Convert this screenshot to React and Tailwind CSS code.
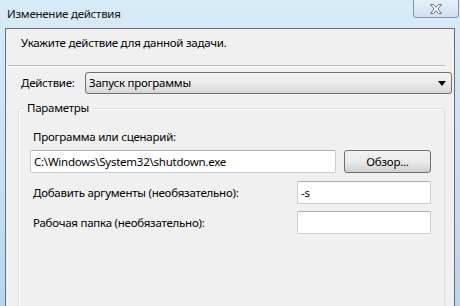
import React from 'react';

function CloseGlyph() {
  return (
    <svg width="14" height="12" viewBox="0 0 14 12">
      <path
        d="M1.5 1.5h3l2.5 2.8 2.5-2.8h3L9 6l3.5 4.5h-3L7 7.7 4.5 10.5h-3L5 6z"
        fill="#f4f6f8"
        stroke="#6b7480"
        strokeWidth="1"
        strokeLinejoin="round"
      />
    </svg>
  );
}

function TextBox({ value, className }) {
  return (
    <div
      className={`h-[23px] bg-white border border-[#c4ccd5] border-t-[#abadb3] rounded-[2px] flex items-center pl-[3px] text-black ${className}`}
    >
      {value}
    </div>
  );
}

export default function App() {
  return (
    <div
      className="w-[460px] h-[306px] overflow-hidden flex flex-col bg-gradient-to-b from-[#d8ebf8] via-[#c9e1f3] to-[#b9d5ec] text-[11.5px] leading-[16px] tracking-[-0.25px] text-black"
      style={{ fontFamily: '"Noto Sans", "Open Sans", sans-serif' }}
    >
      {/* title bar */}
      <div className="h-[28px] flex items-start justify-between shrink-0">
        <div className="pl-[7px] pt-[6px] text-[#111]">Изменение действия</div>
        <div className="w-[46px] h-[18px] mr-[1px] border border-t-0 border-[#8795a5] rounded-b-[4px] bg-gradient-to-b from-[#e6f0f8] to-[#cfe0ee] flex items-center justify-center">
          <CloseGlyph />
        </div>
      </div>

      {/* client area */}
      <div className="flex-1 mx-[5px] border border-b-0 border-[#6e6e6e] bg-[#f0f0f0] flex flex-col">
        <div className="pl-[15px] pt-[6px]">Укажите действие для данной задачи.</div>

        <div className="mt-[14px] ml-[2px] mr-[9px] h-[2px] border-t border-[#b9b9b9] border-b border-b-white" />

        <div className="mt-[5px] flex items-center pl-[15px] pr-[2px]">
          <div className="w-[64px] shrink-0">Действие:</div>
          <div className="flex-1 h-[22px] border border-[#707070] rounded-[3px] bg-gradient-to-b from-[#f2f2f2] via-[#ebebeb] to-[#d6d6d6] flex items-center justify-between pl-[3px] pr-[5px]">
            <span>Запуск программы</span>
            <svg width="8" height="5" viewBox="0 0 8 5">
              <path d="M0 0h8L4 5z" fill="#000" />
            </svg>
          </div>
        </div>

        <fieldset className="mt-[6px] ml-[12px] mr-[9px] h-[240px] border border-[#d5dfe5] rounded-[3px] shadow-[inset_1px_1px_0_#ffffff]">
          <legend className="ml-[5px] px-[3px]">Параметры</legend>
          <div className="pl-[11px] pt-[13px] pr-[13px] flex flex-col">
            <div className="pl-[3px]">Программа или сценарий:</div>
            <div className="mt-[5px] flex items-center">
              <TextBox value="C:\Windows\System32\shutdown.exe" className="w-[306px]" />
              <div className="ml-[8px] w-[87px] h-[23px] border border-[#707070] rounded-[3px] bg-gradient-to-b from-[#f2f2f2] via-[#ebebeb] to-[#cfcfcf] flex items-center justify-center">
                Обзор...
              </div>
            </div>
            <div className="mt-[8px] flex items-center justify-between">
              <div className="pl-[3px]">Добавить аргументы (необязательно):</div>
              <TextBox value="-s" className="w-[134px] h-[22px]" />
            </div>
            <div className="mt-[7px] flex items-center justify-between">
              <div className="pl-[3px]">Рабочая папка (необязательно):</div>
              <TextBox value="" className="w-[134px] h-[22px]" />
            </div>
          </div>
        </fieldset>
      </div>
    </div>
  );
}
